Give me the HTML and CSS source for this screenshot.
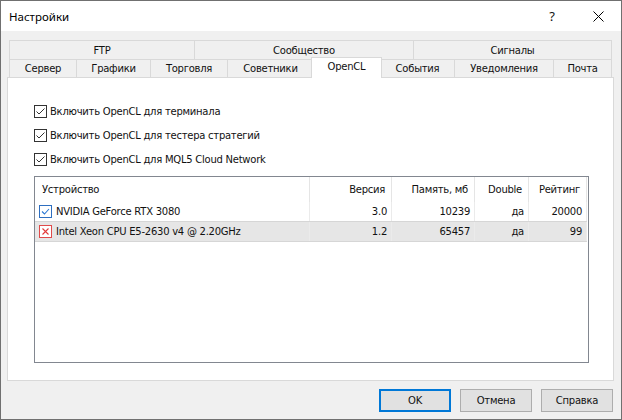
FILE: index.html
```html
<!DOCTYPE html>
<html lang="ru">
<head>
<meta charset="utf-8">
<title>Настройки</title>
<link rel="stylesheet" href="styles.css">
</head>
<body>
<div class="window">
  <div class="titlebar">
    <span class="title">Настройки</span>
    <span class="cap-btn help">?</span>
    <span class="cap-btn close"><svg width="11" height="11" viewBox="0 0 11 11"><path d="M0.5 0.5 L10.5 10.5 M10.5 0.5 L0.5 10.5" stroke="#000" stroke-width="1" fill="none"/></svg></span>
  </div>
  <div class="body">
    <div class="tabs">
      <div class="tab-row row-top">
        <div class="tab">FTP</div>
        <div class="tab">Сообщество</div>
        <div class="tab">Сигналы</div>
      </div>
      <div class="tab-row row-bottom">
        <div class="tab">Сервер</div>
        <div class="tab">Графики</div>
        <div class="tab">Торговля</div>
        <div class="tab">Советники</div>
        <div class="tab active">OpenCL</div>
        <div class="tab">События</div>
        <div class="tab">Уведомления</div>
        <div class="tab">Почта</div>
      </div>
    </div>
    <div class="panel">
      <div class="checks">
        <div class="check"><span class="box"><svg viewBox="0 0 11 11"><path d="M1.5 5.5 L4 8 L9.5 2.5" stroke="#333" stroke-width="1" fill="none"/></svg></span>Включить OpenCL для терминала</div>
        <div class="check"><span class="box"><svg viewBox="0 0 11 11"><path d="M1.5 5.5 L4 8 L9.5 2.5" stroke="#333" stroke-width="1" fill="none"/></svg></span>Включить OpenCL для тестера стратегий</div>
        <div class="check"><span class="box"><svg viewBox="0 0 11 11"><path d="M1.5 5.5 L4 8 L9.5 2.5" stroke="#333" stroke-width="1" fill="none"/></svg></span>Включить OpenCL для MQL5 Cloud Network</div>
      </div>
      <div class="list">
        <div class="lrow lhead">
          <div class="cell dev">Устройство</div>
          <div class="cell">Версия</div>
          <div class="cell">Память, мб</div>
          <div class="cell">Double</div>
          <div class="cell">Рейтинг</div>
        </div>
        <div class="lrow litem">
          <div class="cell dev"><span class="rbox ok"><svg viewBox="0 0 11 11"><path d="M2 5.5 L4.5 8 L9 3" stroke="#2a78d4" stroke-width="1.1" fill="none"/></svg></span>NVIDIA GeForce RTX 3080</div>
          <div class="cell">3.0</div>
          <div class="cell">10239</div>
          <div class="cell">да</div>
          <div class="cell">20000</div>
        </div>
        <div class="lrow litem sel">
          <div class="cell dev"><span class="rbox bad"><svg viewBox="0 0 11 11"><path d="M2.5 2.5 L8.5 8.5 M8.5 2.5 L2.5 8.5" stroke="#e23b3b" stroke-width="1.1" fill="none"/></svg></span>Intel Xeon CPU E5-2630 v4 @ 2.20GHz</div>
          <div class="cell">1.2</div>
          <div class="cell">65457</div>
          <div class="cell">да</div>
          <div class="cell">99</div>
        </div>
      </div>
    </div>
    <div class="buttons">
      <button class="btn default">OK</button>
      <button class="btn">Отмена</button>
      <button class="btn">Справка</button>
    </div>
  </div>
</div>
</body>
</html>
```

FILE: styles.css
```css
* { box-sizing: border-box; }
html, body { margin: 0; padding: 0; background: #fff; }
body {
  font-family: "DejaVu Sans", "Liberation Sans", sans-serif;
  font-size: 10px;
  letter-spacing: -0.25px;
  color: #111;
}
.window {
  width: 622px;
  height: 420px;
  border: 1px solid #707070;
  display: flex;
  flex-direction: column;
  background: #f0f0f0;
}
.titlebar {
  height: 30px;
  flex: none;
  background: #fff;
  display: flex;
}
.title {
  flex: 1;
  padding-left: 8px;
  display: flex;
  align-items: center;
  font-family: "Noto Sans", "Open Sans", sans-serif;
  font-size: 11.5px;
  letter-spacing: 0;
  color: #000;
}
.cap-btn {
  width: 46px;
  display: flex;
  align-items: center;
  justify-content: center;
}
.help {
  font-family: "Noto Sans", sans-serif;
  font-size: 13px;
  letter-spacing: 0;
}
.body {
  flex: 1;
  display: flex;
  flex-direction: column;
  padding: 9px 7px 0 6px;
}
.tabs { margin: 0 2px; flex: none; }
.tab-row { display: grid; }
.row-top { grid-template-columns: 185px 219px 199px; height: 19px; }
.row-bottom { grid-template-columns: 67px 74px 77px 86px 67px 74px 99px 59px; height: 18px; }
.tab {
  border-top: 1px solid #d9d9d9;
  border-left: 1px solid #d9d9d9;
  display: flex;
  align-items: center;
  justify-content: center;
  white-space: nowrap;
}
.tab:last-child { border-right: 1px solid #d9d9d9; }
.tab.active {
  background: #fff;
  margin: -2px -2px -1px;
  border-right: 1px solid #d9d9d9;
  position: relative;
  z-index: 1;
  padding-bottom: 3px;
}
.panel {
  flex: 1;
  background: #fff;
  border: 1px solid #d9d9d9;
  padding: 26px 24px 17px 26px;
  display: flex;
  flex-direction: column;
}
.checks { display: flex; flex-direction: column; gap: 10px; }
.check {
  display: flex;
  align-items: center;
  gap: 3px;
  height: 14px;
  white-space: nowrap;
}
.box {
  width: 13px;
  height: 13px;
  border: 1px solid #333;
  background: #fff;
  display: flex;
}
.box svg, .rbox svg { width: 11px; height: 11px; display: block; }
.list {
  margin-top: 10px;
  flex: 1;
  border: 1px solid #828790;
  background: #fff;
}
.lrow {
  display: grid;
  grid-template-columns: 275px 82px 83px 54px 58px;
  width: 552px;
}
.lhead { height: 25px; }
.lhead .cell { border-right: 1px solid #e5e5e5; padding: 0 6px 0 7px; }
.litem { height: 20px; border-bottom: 1px solid #d6d6d6; }
.litem .cell { border-right: 1px solid #ebebeb; padding: 0 4px; }
.litem.sel { background: #e6e6e6; }
.cell {
  display: flex;
  align-items: center;
  justify-content: flex-end;
  white-space: nowrap;
}
.cell.dev { justify-content: flex-start; }
.litem .cell.dev { gap: 4px; }
.rbox {
  width: 13px;
  height: 13px;
  background: #fff;
  display: flex;
}
.rbox.ok { border: 1px solid #2f6fc0; }
.rbox.bad { border: 1px solid #e04a4a; }
.buttons {
  flex: none;
  height: 38px;
  display: flex;
  justify-content: flex-end;
  align-items: flex-start;
  gap: 9px;
  padding: 8px 1px 0 0;
}
.btn {
  width: 72px;
  height: 23px;
  border: 1px solid #adadad;
  background: #e1e1e1;
  font-family: inherit;
  font-size: 10px;
  letter-spacing: -0.25px;
  color: #111;
  padding: 0;
}
.btn.default { border: 2px solid #0078d7; }
```
